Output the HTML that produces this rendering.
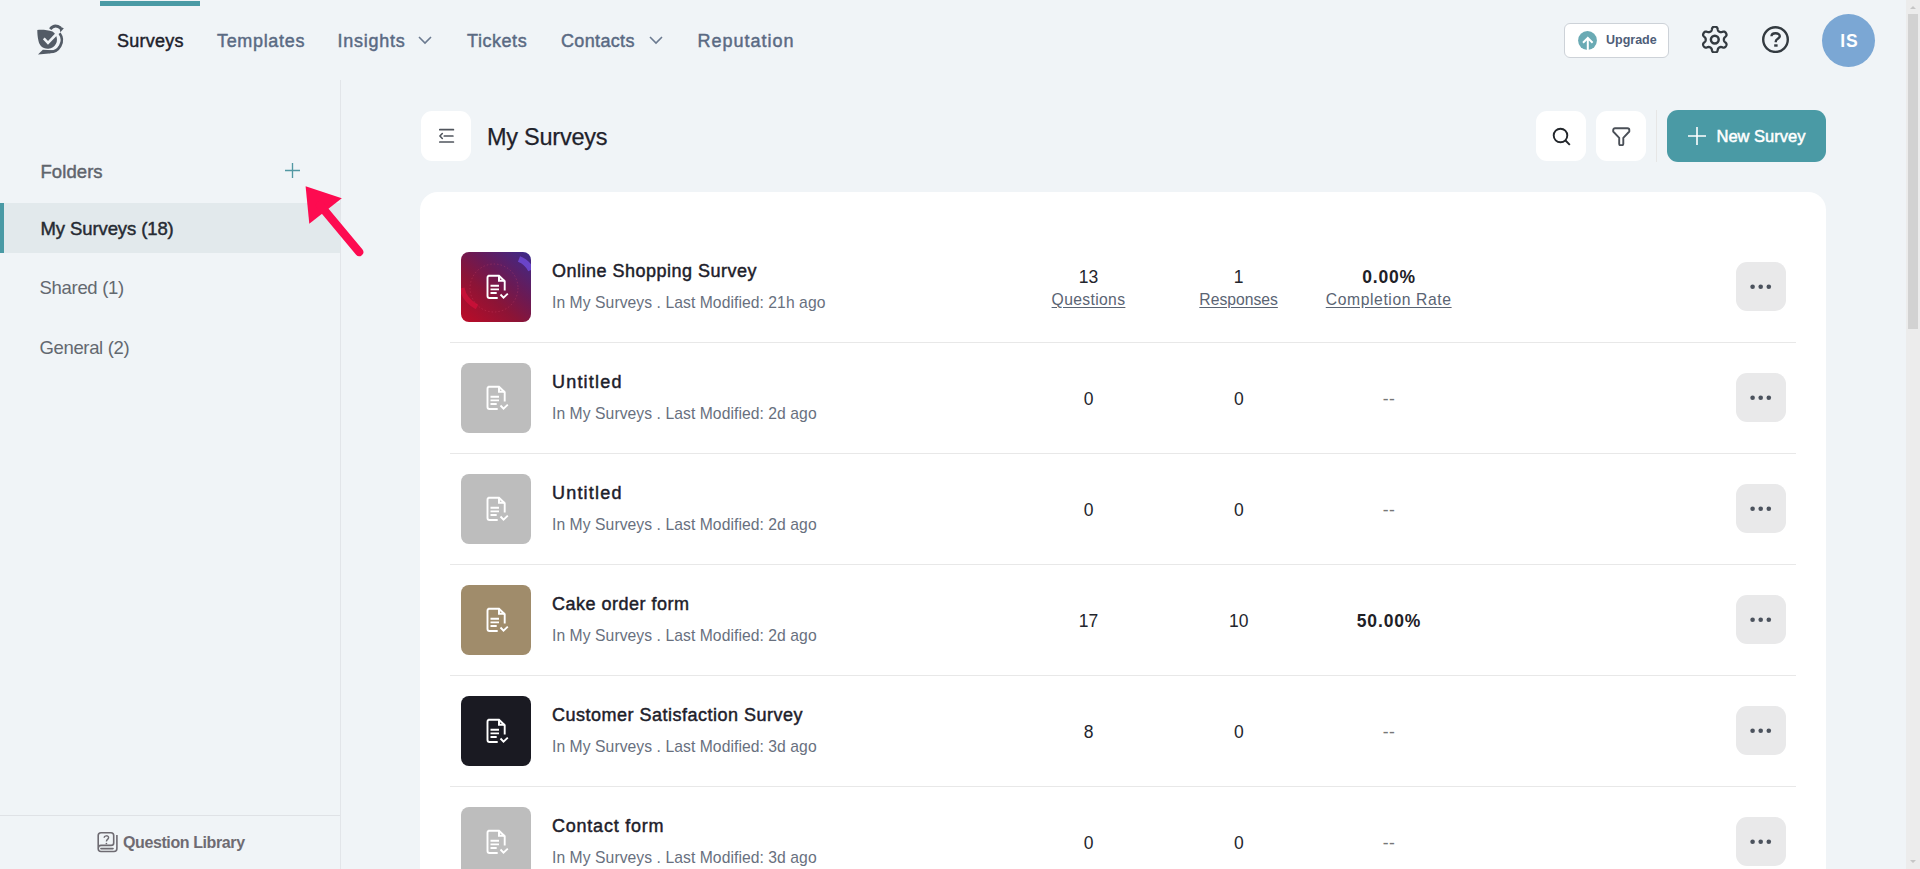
<!DOCTYPE html>
<html><head><meta charset="utf-8"><style>
html,body{margin:0;padding:0;}
body{width:1920px;height:869px;overflow:hidden;position:relative;background:#f0f4f7;font-family:"Liberation Sans", sans-serif;}
</style></head><body>
<div style="position:absolute;left:100px;top:1px;width:100px;height:5px;background:#4a9aa5"></div>
<svg style="position:absolute;left:32px;top:20px" width="40" height="40" viewBox="0 0 40 40"><path d="M5.3,9.9 C10,9.6 16,9.8 20.5,11.6 A9.3,9.3 0 1 1 6.5,21 C5.6,17 5.3,13 5.3,9.9 Z" fill="#535b66"/><path d="M11.8,18.3 L16,22.8 L25,13.5" fill="none" stroke="#f0f4f7" stroke-width="2.6" stroke-linecap="butt"/><path d="M18.2,9.2 Q22.5,3.6 28.6,8" fill="none" stroke="#535b66" stroke-width="2.8"/><path d="M27,6.2 L31.8,8.3 L28.4,12.2 Z" fill="#535b66"/><path d="M27.6,13.3 A11.9,11.9 0 0 1 17,32" fill="none" stroke="#535b66" stroke-width="2.6"/><path d="M21,30.2 L10.8,29.8 L6,34.6 L17,33.5 L21,32.6 Z" fill="#535b66"/></svg>
<div style="position:absolute;left:117px;top:31.76px;font-size:18px;line-height:18px;color:#1d212b;font-weight:400;-webkit-text-stroke:0.45px #1d212b;letter-spacing:0.25px;white-space:nowrap;">Surveys</div>
<div style="position:absolute;left:217px;top:31.76px;font-size:18px;line-height:18px;color:#5a6a83;font-weight:400;-webkit-text-stroke:0.45px #5a6a83;letter-spacing:0.67px;white-space:nowrap;">Templates</div>
<div style="position:absolute;left:337.5px;top:31.76px;font-size:18px;line-height:18px;color:#5a6a83;font-weight:400;-webkit-text-stroke:0.45px #5a6a83;letter-spacing:0.75px;white-space:nowrap;">Insights</div>
<svg style="position:absolute;left:418px;top:36px" width="14" height="9" viewBox="0 0 14 9"><path d="M1,1 L7,7 L13,1" fill="none" stroke="#6b7a90" stroke-width="1.6"/></svg>
<div style="position:absolute;left:467px;top:31.76px;font-size:18px;line-height:18px;color:#5a6a83;font-weight:400;-webkit-text-stroke:0.45px #5a6a83;letter-spacing:0.55px;white-space:nowrap;">Tickets</div>
<div style="position:absolute;left:561px;top:31.76px;font-size:18px;line-height:18px;color:#5a6a83;font-weight:400;-webkit-text-stroke:0.45px #5a6a83;letter-spacing:0.34px;white-space:nowrap;">Contacts</div>
<svg style="position:absolute;left:649px;top:36px" width="14" height="9" viewBox="0 0 14 9"><path d="M1,1 L7,7 L13,1" fill="none" stroke="#6b7a90" stroke-width="1.6"/></svg>
<div style="position:absolute;left:697.5px;top:31.76px;font-size:18px;line-height:18px;color:#5a6a83;font-weight:400;-webkit-text-stroke:0.45px #5a6a83;letter-spacing:1.0px;white-space:nowrap;">Reputation</div>
<div style="position:absolute;left:1564px;top:23px;width:103px;height:33px;background:#fff;border:1px solid #cdd2d8;border-radius:6px"></div>
<svg style="position:absolute;left:1578px;top:31px" width="19" height="19" viewBox="0 0 19 19"><circle cx="9.5" cy="9.5" r="9.4" fill="#6aaab4"/><path d="M9.8,19 L9.8,7 M5,11.8 L9.8,7 L14.6,11.8" fill="none" stroke="#fff" stroke-width="2"/></svg>
<div style="position:absolute;left:1606px;top:33.92px;font-size:12.5px;line-height:12.5px;color:#4e5d78;font-weight:700;letter-spacing:0px;white-space:nowrap;">Upgrade</div>
<svg style="position:absolute;left:1701px;top:26px" width="27" height="27" viewBox="0 0 27 27"><path d="M22.90,13.60 L22.90,13.84 L22.91,14.08 L22.94,14.32 L22.98,14.56 L23.05,14.82 L23.17,15.08 L23.36,15.37 L23.64,15.69 L24.00,16.05 L24.43,16.45 L24.83,16.87 L25.16,17.29 L25.38,17.70 L25.48,18.09 L25.51,18.45 L25.47,18.80 L25.39,19.13 L25.27,19.44 L25.13,19.75 L24.97,20.05 L24.79,20.34 L24.60,20.61 L24.38,20.87 L24.13,21.11 L23.85,21.31 L23.53,21.48 L23.14,21.58 L22.68,21.59 L22.15,21.52 L21.58,21.38 L21.02,21.21 L20.53,21.07 L20.11,20.99 L19.77,20.97 L19.48,21.00 L19.22,21.06 L18.99,21.15 L18.77,21.25 L18.56,21.36 L18.35,21.48 L18.15,21.60 L17.94,21.73 L17.75,21.87 L17.55,22.03 L17.37,22.22 L17.20,22.45 L17.04,22.76 L16.91,23.16 L16.78,23.66 L16.65,24.23 L16.49,24.79 L16.28,25.28 L16.04,25.67 L15.76,25.96 L15.45,26.16 L15.14,26.30 L14.81,26.40 L14.47,26.46 L14.14,26.49 L13.80,26.50 L13.46,26.49 L13.13,26.46 L12.79,26.40 L12.46,26.30 L12.15,26.16 L11.84,25.96 L11.56,25.67 L11.32,25.28 L11.11,24.79 L10.95,24.23 L10.82,23.66 L10.69,23.16 L10.56,22.76 L10.40,22.45 L10.23,22.22 L10.05,22.03 L9.85,21.87 L9.66,21.73 L9.45,21.60 L9.25,21.48 L9.04,21.36 L8.83,21.25 L8.61,21.15 L8.38,21.06 L8.12,21.00 L7.83,20.97 L7.49,20.99 L7.07,21.07 L6.58,21.21 L6.02,21.38 L5.45,21.52 L4.92,21.59 L4.46,21.58 L4.07,21.48 L3.75,21.31 L3.47,21.11 L3.22,20.87 L3.00,20.61 L2.81,20.34 L2.63,20.05 L2.47,19.75 L2.33,19.44 L2.21,19.13 L2.13,18.80 L2.09,18.45 L2.12,18.09 L2.22,17.70 L2.44,17.29 L2.77,16.87 L3.17,16.45 L3.60,16.05 L3.96,15.69 L4.24,15.37 L4.43,15.08 L4.55,14.82 L4.62,14.56 L4.66,14.32 L4.69,14.08 L4.70,13.84 L4.70,13.60 L4.70,13.36 L4.69,13.12 L4.66,12.88 L4.62,12.64 L4.55,12.38 L4.43,12.12 L4.24,11.83 L3.96,11.51 L3.60,11.15 L3.17,10.75 L2.77,10.33 L2.44,9.91 L2.22,9.50 L2.12,9.11 L2.09,8.75 L2.13,8.40 L2.21,8.07 L2.33,7.76 L2.47,7.45 L2.63,7.15 L2.81,6.86 L3.00,6.59 L3.22,6.33 L3.47,6.09 L3.75,5.89 L4.07,5.72 L4.46,5.62 L4.92,5.61 L5.45,5.68 L6.02,5.82 L6.58,5.99 L7.07,6.13 L7.49,6.21 L7.83,6.23 L8.12,6.20 L8.38,6.14 L8.61,6.05 L8.83,5.95 L9.04,5.84 L9.25,5.72 L9.45,5.60 L9.66,5.47 L9.85,5.33 L10.05,5.17 L10.23,4.98 L10.40,4.75 L10.56,4.44 L10.69,4.04 L10.82,3.54 L10.95,2.97 L11.11,2.41 L11.32,1.92 L11.56,1.53 L11.84,1.24 L12.15,1.04 L12.46,0.90 L12.79,0.80 L13.13,0.74 L13.46,0.71 L13.80,0.70 L14.14,0.71 L14.47,0.74 L14.81,0.80 L15.14,0.90 L15.45,1.04 L15.76,1.24 L16.04,1.53 L16.28,1.92 L16.49,2.41 L16.65,2.97 L16.78,3.54 L16.91,4.04 L17.04,4.44 L17.20,4.75 L17.37,4.98 L17.55,5.17 L17.75,5.33 L17.94,5.47 L18.15,5.60 L18.35,5.72 L18.56,5.84 L18.77,5.95 L18.99,6.05 L19.22,6.14 L19.48,6.20 L19.77,6.23 L20.11,6.21 L20.53,6.13 L21.02,5.99 L21.58,5.82 L22.15,5.68 L22.68,5.61 L23.14,5.62 L23.53,5.72 L23.85,5.89 L24.13,6.09 L24.38,6.33 L24.60,6.59 L24.79,6.86 L24.97,7.15 L25.13,7.45 L25.27,7.76 L25.39,8.07 L25.47,8.40 L25.51,8.75 L25.48,9.11 L25.38,9.50 L25.16,9.91 L24.83,10.33 L24.43,10.75 L24.00,11.15 L23.64,11.51 L23.36,11.83 L23.17,12.12 L23.05,12.38 L22.98,12.64 L22.94,12.88 L22.91,13.12 L22.90,13.36 L22.90,13.60 Z" fill="none" stroke="#333a40" stroke-width="2.3" stroke-linejoin="round"/><circle cx="13.8" cy="13.6" r="3.9" fill="none" stroke="#333a40" stroke-width="2.5"/></svg>
<svg style="position:absolute;left:1762px;top:26px" width="27" height="27" viewBox="0 0 27 27"><circle cx="13.5" cy="13.6" r="12.3" fill="none" stroke="#333a40" stroke-width="2.4"/><path d="M9.5,10.3 C9.5,6.4 17.8,6.2 17.8,10.3 C17.8,12.6 13.8,12.8 13.8,15.2 L13.8,16.3" fill="none" stroke="#333a40" stroke-width="2.4"/><rect x="12.2" y="18.3" width="3.4" height="2.4" fill="#333a40"/></svg>
<div style="position:absolute;left:1822px;top:14px;width:53px;height:53px;background:#7ba7d4;border-radius:50%"></div>
<div style="position:absolute;left:1699.3px;width:300px;text-align:center;top:32.79px;font-size:17.5px;line-height:17.5px;color:#fff;font-weight:700;letter-spacing:0.9px;white-space:nowrap;">IS</div>
<div style="position:absolute;left:1906px;top:0px;width:14px;height:869px;background:#ececec"></div>
<div style="position:absolute;left:1908px;top:14px;width:10px;height:315px;background:#d2d2d2"></div>
<svg style="position:absolute;left:1906px;top:0px" width="14" height="869" viewBox="0 0 14 869"><path d="M4,9 L7,6 L10,9 Z M4,860 L10,860 L7,863 Z" fill="#c6c6c6"/></svg>
<div style="position:absolute;left:340px;top:80px;width:1px;height:789px;background:#e2e5e9"></div>
<div style="position:absolute;left:40.5px;top:162.64px;font-size:18.5px;line-height:18.5px;color:#5f646c;font-weight:400;-webkit-text-stroke:0.45px #5f646c;letter-spacing:0.07px;white-space:nowrap;">Folders</div>
<svg style="position:absolute;left:285px;top:163px" width="15" height="15" viewBox="0 0 15 15"><path d="M7.5,0 V15 M0,7.5 H15" stroke="#5298a3" stroke-width="1.35"/></svg>
<div style="position:absolute;left:0px;top:203px;width:340px;height:50px;background:#e2e9ec"></div>
<div style="position:absolute;left:0px;top:203px;width:4px;height:50px;background:#4a9aa5"></div>
<div style="position:absolute;left:40.5px;top:219.84px;font-size:18.5px;line-height:18.5px;color:#262b33;font-weight:400;-webkit-text-stroke:0.45px #262b33;letter-spacing:-0.1px;white-space:nowrap;">My Surveys (18)</div>
<div style="position:absolute;left:39.5px;top:279.44px;font-size:18.5px;line-height:18.5px;color:#63686f;font-weight:400;letter-spacing:-0.3px;white-space:nowrap;">Shared (1)</div>
<div style="position:absolute;left:39.5px;top:339.44px;font-size:18.5px;line-height:18.5px;color:#63686f;font-weight:400;letter-spacing:-0.35px;white-space:nowrap;">General (2)</div>
<div style="position:absolute;left:0px;top:815px;width:340px;height:1px;background:#dfe2e6"></div>
<svg style="position:absolute;left:94px;top:828px" width="28" height="28" viewBox="0 0 28 28"><path d="M4.2,21 V7.5 Q4.2,4.8 7,4.8 H17 Q19.7,4.8 19.7,7.5 V15 Q19.7,17.4 17,17.4 H7 Q4.2,17.4 4.2,20.5 Q4.2,23.5 7,23.5 H20 Q22.9,23.5 22.9,20.5 V7.1" fill="none" stroke="#6e6b72" stroke-width="1.6"/><path d="M6.9,20.6 H19" stroke="#6e6b72" stroke-width="1.6" stroke-linecap="round"/><path d="M10.2,9.8 C10.2,7.2 14.6,7.2 14.6,9.6 C14.6,11.3 12.4,11.5 12.4,13.5" fill="none" stroke="#6e6b72" stroke-width="1.4"/><circle cx="12.4" cy="15.5" r="0.85" fill="#6e6b72"/></svg>
<div style="position:absolute;left:123px;top:834.76px;font-size:16px;line-height:16px;color:#6e6b72;font-weight:700;letter-spacing:-0.4px;white-space:nowrap;">Question Library</div>
<svg style="position:absolute;left:0;top:0" width="400" height="300"><path d="M305.6,186.2 L341.8,198.3 L309.3,223.8 Z" fill="#fd0b50"/><path d="M320,205 L359.2,252" stroke="#fd0b50" stroke-width="8.2" stroke-linecap="round"/></svg>
<div style="position:absolute;left:421px;top:111px;width:50px;height:50px;background:#fff;border-radius:11px"></div>
<svg style="position:absolute;left:432px;top:122px" width="30" height="28" viewBox="0 0 30 28"><path d="M7.8,7.7 H21.4 M12.3,14 H20.9 M7.8,20 H21.4" stroke="#50555d" stroke-width="1.7" stroke-linecap="round"/><path d="M10.3,11.5 L7.9,14 L10.3,16.5" fill="none" stroke="#50555d" stroke-width="1.6" stroke-linecap="round" stroke-linejoin="round"/></svg>
<div style="position:absolute;left:487px;top:126.11px;font-size:23.5px;line-height:23.5px;color:#1f222b;font-weight:400;-webkit-text-stroke:0.25px #1f222b;letter-spacing:-0.25px;white-space:nowrap;">My Surveys</div>
<div style="position:absolute;left:1536px;top:111px;width:50px;height:50px;background:#fff;border-radius:11px"></div>
<svg style="position:absolute;left:1552px;top:127px" width="19" height="19" viewBox="0 0 19 19"><circle cx="8.5" cy="8.5" r="6.8" fill="none" stroke="#22262b" stroke-width="1.9"/><path d="M13.5,13.5 L17.8,17.8" stroke="#22262b" stroke-width="1.9"/></svg>
<div style="position:absolute;left:1596px;top:111px;width:50px;height:50px;background:#fff;border-radius:11px"></div>
<svg style="position:absolute;left:1612px;top:127px" width="19" height="19" viewBox="0 0 19 19"><path d="M1.2,3 C1.2,1.8 2,1.2 3,1.2 H15.5 C16.5,1.2 17.3,1.8 17.3,3 V4.5 L11.3,10.8 V16.8 C11.3,17.8 10.5,18.3 9.5,18.3 H8.8 C7.8,18.3 7.2,17.8 7.2,16.8 V10.8 L1.2,4.5 Z" fill="none" stroke="#4a4f57" stroke-width="1.9" stroke-linejoin="round"/></svg>
<div style="position:absolute;left:1656px;top:110px;width:1px;height:52px;background:#e6e6e6"></div>
<div style="position:absolute;left:1667px;top:110px;width:159px;height:52px;background:#4a9aa5;border-radius:11px"></div>
<svg style="position:absolute;left:1688px;top:127px" width="18" height="18" viewBox="0 0 18 18"><path d="M9,0 V18 M0,9 H18" stroke="#fff" stroke-width="1.6"/></svg>
<div style="position:absolute;left:1716.5px;top:128.03px;font-size:16.5px;line-height:16.5px;color:#fff;font-weight:400;-webkit-text-stroke:0.5px #fff;letter-spacing:0px;white-space:nowrap;">New Survey</div>
<div style="position:absolute;left:420px;top:192px;width:1406px;height:800px;background:#fff;border-radius:18px"></div>
<div style="position:absolute;left:461px;top:252px;width:70px;height:70px;background:linear-gradient(40deg,#bd0b27 0%,#8c1436 38%,#6a1a55 62%,#3a2a8c 100%);border-radius:8px"></div>
<svg style="position:absolute;left:461px;top:252px" width="70" height="70" viewBox="0 0 70 70"><circle cx="33" cy="36" r="24" fill="none" stroke="#e05070" stroke-opacity="0.35" stroke-width="0.8" stroke-dasharray="1.5 2"/><path d="M1,36 Q3,48 16,55" fill="none" stroke="#d0103a" stroke-width="5" stroke-opacity="0.8"/><path d="M58,7 Q66,10 70,18" fill="none" stroke="#6a44c8" stroke-width="6"/></svg>
<svg style="position:absolute;left:476px;top:267px" width="40" height="40" viewBox="0 0 40 40"><path d="M12.2,8.7 H23 L28.7,14.2 V23.5 M21.7,31 H13.5 Q11.5,31 11.5,29 V10.7 Q11.5,8.7 13.5,8.7" fill="none" stroke="#fff" stroke-width="1.9"/><path d="M23,8.7 V13.8 H28.7" fill="none" stroke="#fff" stroke-width="2"/><path d="M14.5,18.8 H23 M14.5,22.4 H23 M14.5,26 H20.7" stroke="#fff" stroke-width="1.9"/><path d="M24.5,27.5 L27.5,30.6 L31.8,26.6" fill="none" stroke="#fff" stroke-width="1.9"/></svg>
<div style="position:absolute;left:552px;top:261.76px;font-size:18px;line-height:18px;color:#1d202a;font-weight:400;-webkit-text-stroke:0.45px #1d202a;letter-spacing:0.5px;white-space:nowrap;">Online Shopping Survey</div>
<div style="position:absolute;left:552px;top:294.71px;font-size:15.7px;line-height:15.7px;color:#68707e;font-weight:400;letter-spacing:0.06px;white-space:nowrap;">In My Surveys . Last Modified: 21h ago</div>
<div style="position:absolute;left:938.5px;width:300px;text-align:center;top:269.19px;font-size:17.5px;line-height:17.5px;color:#23262d;font-weight:400;letter-spacing:0px;white-space:nowrap;">13</div>
<div style="position:absolute;left:1088.5px;width:300px;text-align:center;top:269.19px;font-size:17.5px;line-height:17.5px;color:#23262d;font-weight:400;letter-spacing:0px;white-space:nowrap;">1</div>
<div style="position:absolute;left:1239px;width:300px;text-align:center;top:269.19px;font-size:17.5px;line-height:17.5px;color:#1e2127;font-weight:700;letter-spacing:0.8px;white-space:nowrap;">0.00%</div>
<div style="position:absolute;left:938.5px;width:300px;text-align:center;top:291.71px;font-size:15.7px;line-height:15.7px;color:#5a6473;font-weight:400;letter-spacing:0.35px;white-space:nowrap;text-decoration:underline;text-underline-offset:1.5px">Questions</div>
<div style="position:absolute;left:1088.6px;width:300px;text-align:center;top:291.71px;font-size:15.7px;line-height:15.7px;color:#5a6473;font-weight:400;letter-spacing:0px;white-space:nowrap;text-decoration:underline;text-underline-offset:1.5px">Responses</div>
<div style="position:absolute;left:1238.7px;width:300px;text-align:center;top:291.71px;font-size:15.7px;line-height:15.7px;color:#5a6473;font-weight:400;letter-spacing:0.6px;white-space:nowrap;text-decoration:underline;text-underline-offset:1.5px">Completion Rate</div>
<div style="position:absolute;left:1736px;top:262px;width:50px;height:49px;background:#e9e9ea;border-radius:11px"></div>
<svg style="position:absolute;left:1750px;top:284px" width="22" height="6" viewBox="0 0 22 6"><circle cx="2.6" cy="2.8" r="2.3" fill="#4b525d"/><circle cx="10.7" cy="2.8" r="2.3" fill="#4b525d"/><circle cx="18.8" cy="2.8" r="2.3" fill="#4b525d"/></svg>
<div style="position:absolute;left:450px;top:342px;width:1346px;height:1px;background:#e8e8e8"></div>
<div style="position:absolute;left:461px;top:363px;width:70px;height:70px;background:#bdbdbd;border-radius:8px"></div>
<svg style="position:absolute;left:476px;top:378px" width="40" height="40" viewBox="0 0 40 40"><path d="M12.2,8.7 H23 L28.7,14.2 V23.5 M21.7,31 H13.5 Q11.5,31 11.5,29 V10.7 Q11.5,8.7 13.5,8.7" fill="none" stroke="#fff" stroke-width="1.9"/><path d="M23,8.7 V13.8 H28.7" fill="none" stroke="#fff" stroke-width="2"/><path d="M14.5,18.8 H23 M14.5,22.4 H23 M14.5,26 H20.7" stroke="#fff" stroke-width="1.9"/><path d="M24.5,27.5 L27.5,30.6 L31.8,26.6" fill="none" stroke="#fff" stroke-width="1.9"/></svg>
<div style="position:absolute;left:552px;top:372.76px;font-size:18px;line-height:18px;color:#1d202a;font-weight:400;-webkit-text-stroke:0.45px #1d202a;letter-spacing:1.2px;white-space:nowrap;">Untitled</div>
<div style="position:absolute;left:552px;top:405.71px;font-size:15.7px;line-height:15.7px;color:#68707e;font-weight:400;letter-spacing:0.06px;white-space:nowrap;">In My Surveys . Last Modified: 2d ago</div>
<div style="position:absolute;left:938.5px;width:300px;text-align:center;top:391.19px;font-size:17.5px;line-height:17.5px;color:#23262d;font-weight:400;letter-spacing:0px;white-space:nowrap;">0</div>
<div style="position:absolute;left:1088.8px;width:300px;text-align:center;top:391.19px;font-size:17.5px;line-height:17.5px;color:#23262d;font-weight:400;letter-spacing:0px;white-space:nowrap;">0</div>
<div style="position:absolute;left:1239px;width:300px;text-align:center;top:391.19px;font-size:17.5px;line-height:17.5px;color:#777;font-weight:400;letter-spacing:0.5px;white-space:nowrap;">--</div>
<div style="position:absolute;left:1736px;top:373px;width:50px;height:49px;background:#e9e9ea;border-radius:11px"></div>
<svg style="position:absolute;left:1750px;top:395px" width="22" height="6" viewBox="0 0 22 6"><circle cx="2.6" cy="2.8" r="2.3" fill="#4b525d"/><circle cx="10.7" cy="2.8" r="2.3" fill="#4b525d"/><circle cx="18.8" cy="2.8" r="2.3" fill="#4b525d"/></svg>
<div style="position:absolute;left:450px;top:453px;width:1346px;height:1px;background:#e8e8e8"></div>
<div style="position:absolute;left:461px;top:474px;width:70px;height:70px;background:#bdbdbd;border-radius:8px"></div>
<svg style="position:absolute;left:476px;top:489px" width="40" height="40" viewBox="0 0 40 40"><path d="M12.2,8.7 H23 L28.7,14.2 V23.5 M21.7,31 H13.5 Q11.5,31 11.5,29 V10.7 Q11.5,8.7 13.5,8.7" fill="none" stroke="#fff" stroke-width="1.9"/><path d="M23,8.7 V13.8 H28.7" fill="none" stroke="#fff" stroke-width="2"/><path d="M14.5,18.8 H23 M14.5,22.4 H23 M14.5,26 H20.7" stroke="#fff" stroke-width="1.9"/><path d="M24.5,27.5 L27.5,30.6 L31.8,26.6" fill="none" stroke="#fff" stroke-width="1.9"/></svg>
<div style="position:absolute;left:552px;top:483.76px;font-size:18px;line-height:18px;color:#1d202a;font-weight:400;-webkit-text-stroke:0.45px #1d202a;letter-spacing:1.2px;white-space:nowrap;">Untitled</div>
<div style="position:absolute;left:552px;top:516.71px;font-size:15.7px;line-height:15.7px;color:#68707e;font-weight:400;letter-spacing:0.06px;white-space:nowrap;">In My Surveys . Last Modified: 2d ago</div>
<div style="position:absolute;left:938.5px;width:300px;text-align:center;top:502.19px;font-size:17.5px;line-height:17.5px;color:#23262d;font-weight:400;letter-spacing:0px;white-space:nowrap;">0</div>
<div style="position:absolute;left:1088.8px;width:300px;text-align:center;top:502.19px;font-size:17.5px;line-height:17.5px;color:#23262d;font-weight:400;letter-spacing:0px;white-space:nowrap;">0</div>
<div style="position:absolute;left:1239px;width:300px;text-align:center;top:502.19px;font-size:17.5px;line-height:17.5px;color:#777;font-weight:400;letter-spacing:0.5px;white-space:nowrap;">--</div>
<div style="position:absolute;left:1736px;top:484px;width:50px;height:49px;background:#e9e9ea;border-radius:11px"></div>
<svg style="position:absolute;left:1750px;top:506px" width="22" height="6" viewBox="0 0 22 6"><circle cx="2.6" cy="2.8" r="2.3" fill="#4b525d"/><circle cx="10.7" cy="2.8" r="2.3" fill="#4b525d"/><circle cx="18.8" cy="2.8" r="2.3" fill="#4b525d"/></svg>
<div style="position:absolute;left:450px;top:564px;width:1346px;height:1px;background:#e8e8e8"></div>
<div style="position:absolute;left:461px;top:585px;width:70px;height:70px;background:#a08c6b;border-radius:8px"></div>
<svg style="position:absolute;left:476px;top:600px" width="40" height="40" viewBox="0 0 40 40"><path d="M12.2,8.7 H23 L28.7,14.2 V23.5 M21.7,31 H13.5 Q11.5,31 11.5,29 V10.7 Q11.5,8.7 13.5,8.7" fill="none" stroke="#fff" stroke-width="1.9"/><path d="M23,8.7 V13.8 H28.7" fill="none" stroke="#fff" stroke-width="2"/><path d="M14.5,18.8 H23 M14.5,22.4 H23 M14.5,26 H20.7" stroke="#fff" stroke-width="1.9"/><path d="M24.5,27.5 L27.5,30.6 L31.8,26.6" fill="none" stroke="#fff" stroke-width="1.9"/></svg>
<div style="position:absolute;left:552px;top:594.76px;font-size:18px;line-height:18px;color:#1d202a;font-weight:400;-webkit-text-stroke:0.45px #1d202a;letter-spacing:0.5px;white-space:nowrap;">Cake order form</div>
<div style="position:absolute;left:552px;top:627.71px;font-size:15.7px;line-height:15.7px;color:#68707e;font-weight:400;letter-spacing:0.06px;white-space:nowrap;">In My Surveys . Last Modified: 2d ago</div>
<div style="position:absolute;left:938.5px;width:300px;text-align:center;top:613.19px;font-size:17.5px;line-height:17.5px;color:#23262d;font-weight:400;letter-spacing:0px;white-space:nowrap;">17</div>
<div style="position:absolute;left:1088.8px;width:300px;text-align:center;top:613.19px;font-size:17.5px;line-height:17.5px;color:#23262d;font-weight:400;letter-spacing:0px;white-space:nowrap;">10</div>
<div style="position:absolute;left:1239px;width:300px;text-align:center;top:613.19px;font-size:17.5px;line-height:17.5px;color:#1e2127;font-weight:700;letter-spacing:0.85px;white-space:nowrap;">50.00%</div>
<div style="position:absolute;left:1736px;top:595px;width:50px;height:49px;background:#e9e9ea;border-radius:11px"></div>
<svg style="position:absolute;left:1750px;top:617px" width="22" height="6" viewBox="0 0 22 6"><circle cx="2.6" cy="2.8" r="2.3" fill="#4b525d"/><circle cx="10.7" cy="2.8" r="2.3" fill="#4b525d"/><circle cx="18.8" cy="2.8" r="2.3" fill="#4b525d"/></svg>
<div style="position:absolute;left:450px;top:675px;width:1346px;height:1px;background:#e8e8e8"></div>
<div style="position:absolute;left:461px;top:696px;width:70px;height:70px;background:#1a1a22;border-radius:8px"></div>
<svg style="position:absolute;left:476px;top:711px" width="40" height="40" viewBox="0 0 40 40"><path d="M12.2,8.7 H23 L28.7,14.2 V23.5 M21.7,31 H13.5 Q11.5,31 11.5,29 V10.7 Q11.5,8.7 13.5,8.7" fill="none" stroke="#fff" stroke-width="1.9"/><path d="M23,8.7 V13.8 H28.7" fill="none" stroke="#fff" stroke-width="2"/><path d="M14.5,18.8 H23 M14.5,22.4 H23 M14.5,26 H20.7" stroke="#fff" stroke-width="1.9"/><path d="M24.5,27.5 L27.5,30.6 L31.8,26.6" fill="none" stroke="#fff" stroke-width="1.9"/></svg>
<div style="position:absolute;left:552px;top:705.76px;font-size:18px;line-height:18px;color:#1d202a;font-weight:400;-webkit-text-stroke:0.45px #1d202a;letter-spacing:0.5px;white-space:nowrap;">Customer Satisfaction Survey</div>
<div style="position:absolute;left:552px;top:738.71px;font-size:15.7px;line-height:15.7px;color:#68707e;font-weight:400;letter-spacing:0.06px;white-space:nowrap;">In My Surveys . Last Modified: 3d ago</div>
<div style="position:absolute;left:938.5px;width:300px;text-align:center;top:724.19px;font-size:17.5px;line-height:17.5px;color:#23262d;font-weight:400;letter-spacing:0px;white-space:nowrap;">8</div>
<div style="position:absolute;left:1088.8px;width:300px;text-align:center;top:724.19px;font-size:17.5px;line-height:17.5px;color:#23262d;font-weight:400;letter-spacing:0px;white-space:nowrap;">0</div>
<div style="position:absolute;left:1239px;width:300px;text-align:center;top:724.19px;font-size:17.5px;line-height:17.5px;color:#777;font-weight:400;letter-spacing:0.5px;white-space:nowrap;">--</div>
<div style="position:absolute;left:1736px;top:706px;width:50px;height:49px;background:#e9e9ea;border-radius:11px"></div>
<svg style="position:absolute;left:1750px;top:728px" width="22" height="6" viewBox="0 0 22 6"><circle cx="2.6" cy="2.8" r="2.3" fill="#4b525d"/><circle cx="10.7" cy="2.8" r="2.3" fill="#4b525d"/><circle cx="18.8" cy="2.8" r="2.3" fill="#4b525d"/></svg>
<div style="position:absolute;left:450px;top:786px;width:1346px;height:1px;background:#e8e8e8"></div>
<div style="position:absolute;left:461px;top:807px;width:70px;height:70px;background:#bdbdbd;border-radius:8px"></div>
<svg style="position:absolute;left:476px;top:822px" width="40" height="40" viewBox="0 0 40 40"><path d="M12.2,8.7 H23 L28.7,14.2 V23.5 M21.7,31 H13.5 Q11.5,31 11.5,29 V10.7 Q11.5,8.7 13.5,8.7" fill="none" stroke="#fff" stroke-width="1.9"/><path d="M23,8.7 V13.8 H28.7" fill="none" stroke="#fff" stroke-width="2"/><path d="M14.5,18.8 H23 M14.5,22.4 H23 M14.5,26 H20.7" stroke="#fff" stroke-width="1.9"/><path d="M24.5,27.5 L27.5,30.6 L31.8,26.6" fill="none" stroke="#fff" stroke-width="1.9"/></svg>
<div style="position:absolute;left:552px;top:816.76px;font-size:18px;line-height:18px;color:#1d202a;font-weight:400;-webkit-text-stroke:0.45px #1d202a;letter-spacing:0.77px;white-space:nowrap;">Contact form</div>
<div style="position:absolute;left:552px;top:849.71px;font-size:15.7px;line-height:15.7px;color:#68707e;font-weight:400;letter-spacing:0.06px;white-space:nowrap;">In My Surveys . Last Modified: 3d ago</div>
<div style="position:absolute;left:938.5px;width:300px;text-align:center;top:835.19px;font-size:17.5px;line-height:17.5px;color:#23262d;font-weight:400;letter-spacing:0px;white-space:nowrap;">0</div>
<div style="position:absolute;left:1088.8px;width:300px;text-align:center;top:835.19px;font-size:17.5px;line-height:17.5px;color:#23262d;font-weight:400;letter-spacing:0px;white-space:nowrap;">0</div>
<div style="position:absolute;left:1239px;width:300px;text-align:center;top:835.19px;font-size:17.5px;line-height:17.5px;color:#777;font-weight:400;letter-spacing:0.5px;white-space:nowrap;">--</div>
<div style="position:absolute;left:1736px;top:817px;width:50px;height:49px;background:#e9e9ea;border-radius:11px"></div>
<svg style="position:absolute;left:1750px;top:839px" width="22" height="6" viewBox="0 0 22 6"><circle cx="2.6" cy="2.8" r="2.3" fill="#4b525d"/><circle cx="10.7" cy="2.8" r="2.3" fill="#4b525d"/><circle cx="18.8" cy="2.8" r="2.3" fill="#4b525d"/></svg>
</body></html>
